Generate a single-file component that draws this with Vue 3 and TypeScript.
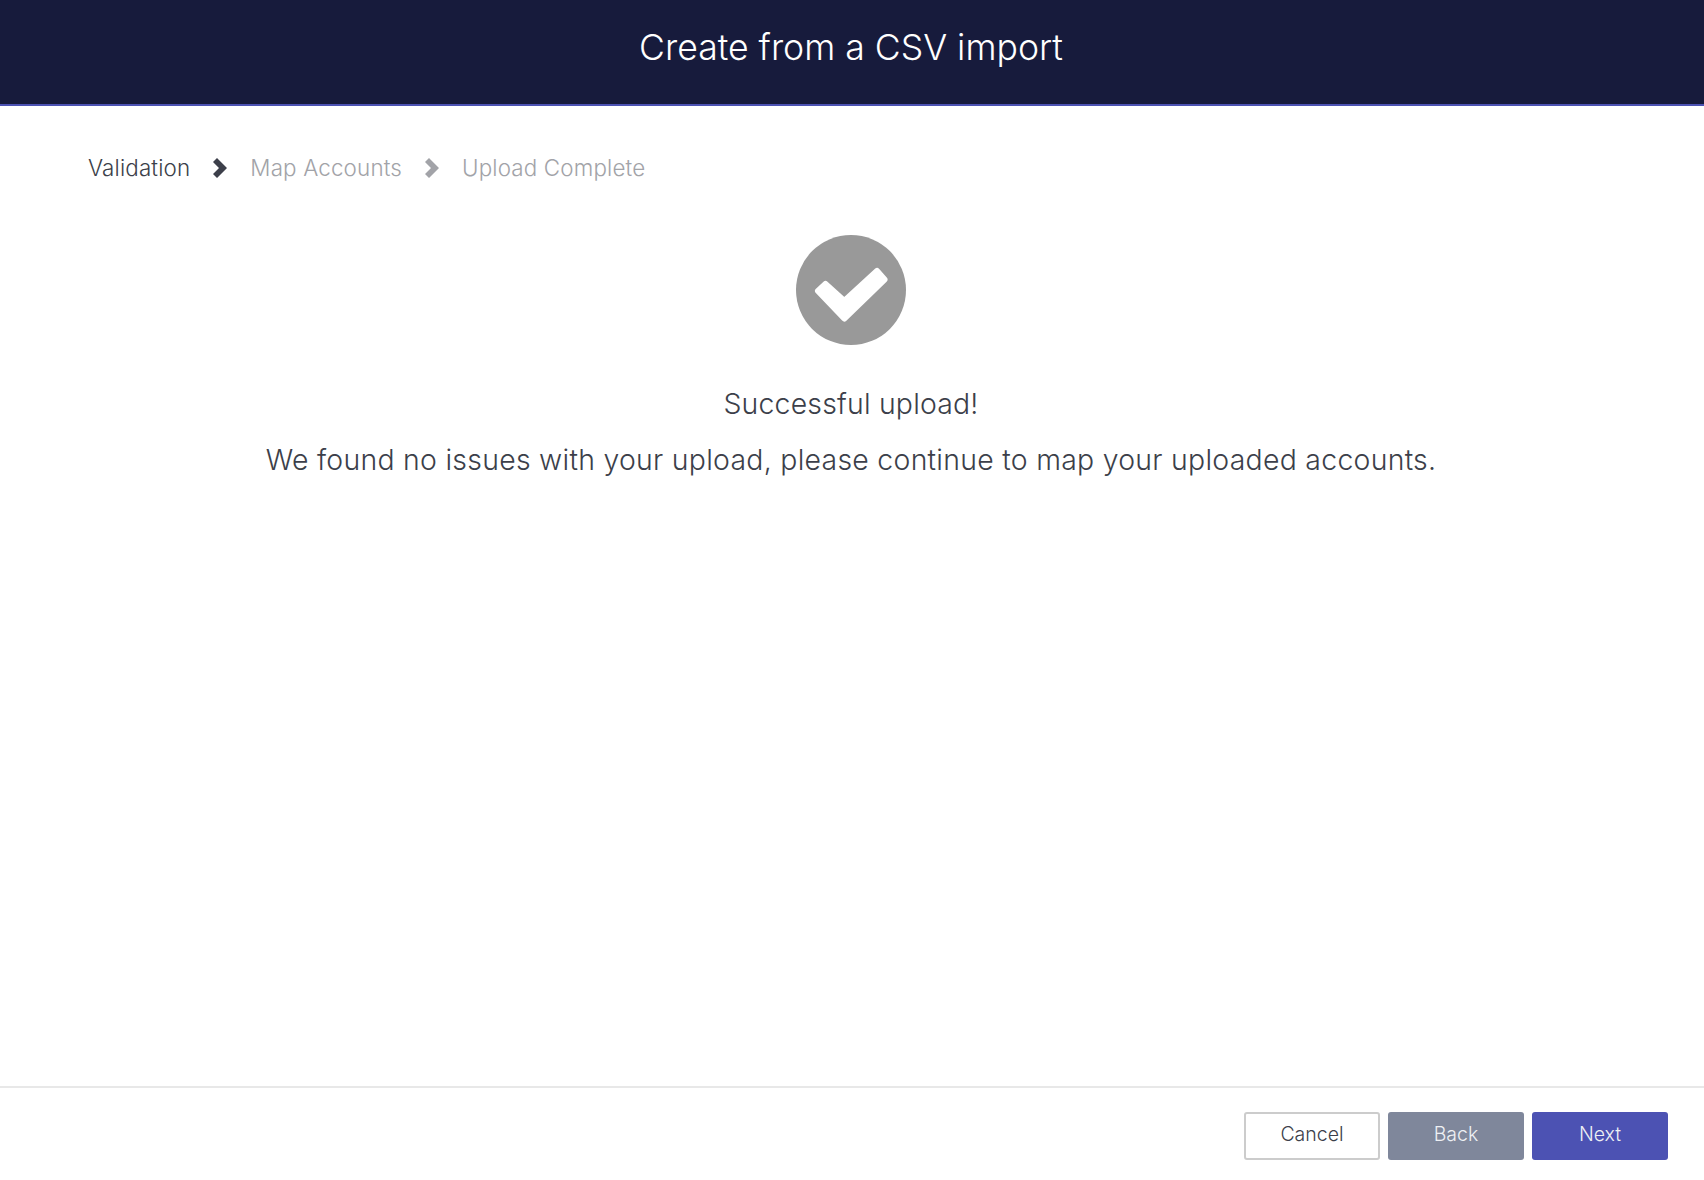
<script setup lang="ts">
const steps: { label: string; active: boolean }[] = [
  { label: 'Validation', active: true },
  { label: 'Map Accounts', active: false },
  { label: 'Upload Complete', active: false },
]
</script>

<template>
  <div class="page">
    <header class="top"><h1>Create from a CSV import</h1></header>
    <nav class="crumbs">
      <template v-for="(s, i) in steps" :key="s.label">
        <span class="step" :class="{ on: s.active }">{{ s.label }}</span>
        <svg v-if="i < steps.length - 1" class="chev" :class="{ on: s.active }" width="16" height="20" viewBox="0 0 16 20">
          <path d="M1 4 L5 0 L15 10 L5 20 L1 16 L7 10 Z" fill="currentColor" />
        </svg>
      </template>
    </nav>
    <main class="body">
      <svg class="ok" width="110" height="110" viewBox="0 0 110 110">
        <circle cx="55" cy="55" r="55" fill="#999999" />
        <polygon points="22,56 29.5,49 48.3,66 81,36 88.5,44.5 48.3,83.5" fill="#fff" stroke="#fff" stroke-width="6" stroke-linejoin="round" />
      </svg>
      <p class="title">Successful upload!</p>
      <p class="msg">We found no issues with your upload, please continue to map your uploaded accounts.</p>
    </main>
    <footer class="foot">
      <button class="btn cancel">Cancel</button>
      <button class="btn back">Back</button>
      <button class="btn next">Next</button>
    </footer>
  </div>
</template>

<style>
html, body { margin: 0; background: #fff; }
</style>

<style scoped>
.page {
  height: 1180px;
  display: flex;
  flex-direction: column;
  font-family: Inter, "Open Sans", sans-serif;
  font-weight: 350;
  color: #3c3f4a;
}
.top {
  height: 104px;
  padding-right: 2px;
  background: #171b3c;
  border-bottom: 2px solid #4c52b3;
  display: flex;
  justify-content: center;
  align-items: flex-start;
}
.top h1 {
  margin: 27px 0 0;
  font-size: 35.6px;
  line-height: 42px;
  font-weight: 350;
  color: #fff;
}
.crumbs {
  display: flex;
  align-items: center;
  padding: 47px 88px 0;
  height: 30px;
}
.step { font-size: 22.4px; line-height: 30px; letter-spacing: 0.15px; color: #a2a3a8; }
.step.on { color: #3c3f4a; }
.chev { margin: 0 22px; color: #a2a3a8; }
.chev.on { color: #3c3f4a; }
.body {
  flex: 1;
  display: flex;
  flex-direction: column;
  align-items: center;
  padding: 52px 2px 0 0;
}
.ok { display: block; }
.title { margin: 41px 0 0; font-size: 28.4px; line-height: 36px; letter-spacing: 0.2px; }
.msg { margin: 20px 0 0; font-size: 28.4px; line-height: 36px; letter-spacing: 0.28px; }
.foot {
  height: 94px;
  border-top: 2px solid #e8e8e8;
  display: flex;
  justify-content: flex-end;
  gap: 8px;
  padding: 24px 36px 0;
  box-sizing: border-box;
}
.btn {
  width: 136px;
  height: 48px;
  border-radius: 3px;
  font-family: inherit;
  font-weight: 350;
  font-size: 19.5px;
  padding: 0 0 5px;
  box-sizing: border-box;
  border: 0;
  color: #eef0f4;
}
.cancel { background: #fff; border: 2px solid #cccccc; color: #3c3f4a; }
.back { background: #7f879b; }
.next { background: #4c52b3; }
</style>
